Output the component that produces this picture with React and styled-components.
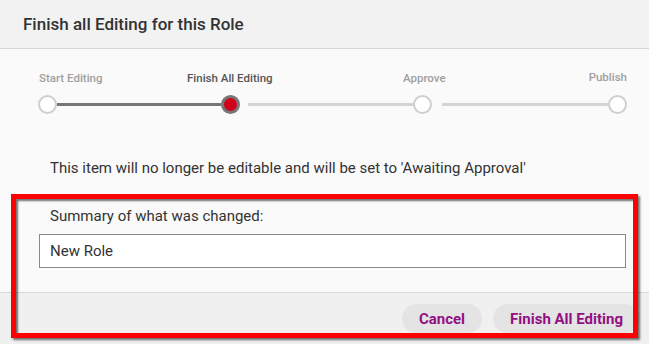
import React from "react";
import styled, { createGlobalStyle } from "styled-components";

const Global = createGlobalStyle`
  html, body { margin: 0; padding: 0; }
  body { font-family: Roboto, "Liberation Sans", Arial, sans-serif; background: #fafafa; }
  * { box-sizing: border-box; }
`;

const Modal = styled.div`
  position: relative;
  width: 649px;
  height: 344px;
  display: flex;
  flex-direction: column;
  background: #fafafa;
  overflow: hidden;
`;

const Header = styled.div`
  height: 49px;
  flex: none;
  display: flex;
  align-items: center;
  padding: 0 23px 1px;
  background: #f2f2f2;
  border-bottom: 1px solid #d6d6d6;
`;

const Title = styled.h2`
  margin: 0;
  font-size: 17px;
  font-weight: 500;
  color: #333;
`;

const Body = styled.div`
  flex: 1;
  padding: 22px 23px 0 38px;
`;

const LabelRow = styled.div`
  display: flex;
  height: 16px;
  padding-left: 1px;
`;

const StepLabel = styled.div`
  width: ${(p) => p.$width}px;
  flex: none;
  text-align: ${(p) => p.$align || "left"};
  font-size: 11.5px;
  font-weight: 500;
  line-height: 14px;
  color: ${(p) => (p.$active ? "#555" : "#a0a0a0")};
  white-space: nowrap;
  margin-top: ${(p) => (p.$raise ? "-1px" : "0")};
`;

const Track = styled.div`
  display: flex;
  align-items: center;
  margin-top: 8px;
  height: 19px;
`;

const Circle = styled.div`
  width: 19px;
  height: 19px;
  flex: none;
  border-radius: 50%;
  background: ${(p) => (p.$active ? "#d0021b" : "#fff")};
  border: ${(p) => (p.$active ? "3px solid #777" : "2px solid #cfcfcf")};
`;

const Connector = styled.div`
  width: ${(p) => p.$width}px;
  flex: none;
  height: 3px;
  margin-left: ${(p) => p.$gap || 0}px;
  background: ${(p) => (p.$done ? "#777" : "#d4d4d4")};
`;

const Message = styled.p`
  margin: 45px 0 0 12px;
  font-size: 15px;
  line-height: 18px;
  color: #333;
`;

const FieldLabel = styled.label`
  display: block;
  margin: 30px 0 0 12px;
  font-size: 15px;
  line-height: 18px;
  color: #333;
`;

const Input = styled.div`
  margin: 9px 0 0 1px;
  height: 34px;
  display: flex;
  align-items: center;
  padding: 0 10px;
  background: #fff;
  border: 1px solid #8a8a8a;
  font-size: 15px;
  color: #333;
`;

const Footer = styled.div`
  height: 52px;
  flex: none;
  display: flex;
  justify-content: flex-end;
  align-items: flex-start;
  gap: 11px;
  padding: 11px 9px 0 0;
  background: #f0f0f0;
  border-top: 1px solid #d6d6d6;
`;

const Button = styled.button`
  height: 29px;
  padding: 0 17px;
  border: none;
  border-radius: 15px;
  background: #e4e4e4;
  font-family: Roboto, "Liberation Sans", Arial, sans-serif;
  font-size: 15px;
  font-weight: 700;
  color: #931083;
  cursor: pointer;
`;

const Highlight = styled.div`
  position: absolute;
  left: 11px;
  top: 194px;
  width: 627px;
  height: 144px;
  border: 5px solid #ff0000;
  box-shadow: 2px 2px 2px rgba(0, 0, 0, 0.55), inset 2px 2px 2px rgba(0, 0, 0, 0.55);
  pointer-events: none;
`;

export default function App() {
  return (
    <>
      <Global />
      <Modal>
        <Header>
          <Title>Finish all Editing for this Role</Title>
        </Header>
        <Body>
          <LabelRow>
            <StepLabel $width={148}>Start Editing</StepLabel>
            <StepLabel $width={216} $active>Finish All Editing</StepLabel>
            <StepLabel $width={185}>Approve</StepLabel>
            <StepLabel $width={39} $align="right" $raise>Publish</StepLabel>
          </LabelRow>
          <Track>
            <Circle />
            <Connector $width={164} $done />
            <Circle $active />
            <Connector $width={165} $gap={8} />
            <Circle />
            <Connector $width={166} $gap={10} />
            <Circle />
          </Track>
          <Message>This item will no longer be editable and will be set to 'Awaiting Approval'</Message>
          <FieldLabel>Summary of what was changed:</FieldLabel>
          <Input>New Role</Input>
        </Body>
        <Footer>
          <Button>Cancel</Button>
          <Button>Finish All Editing</Button>
        </Footer>
        <Highlight />
      </Modal>
    </>
  );
}
